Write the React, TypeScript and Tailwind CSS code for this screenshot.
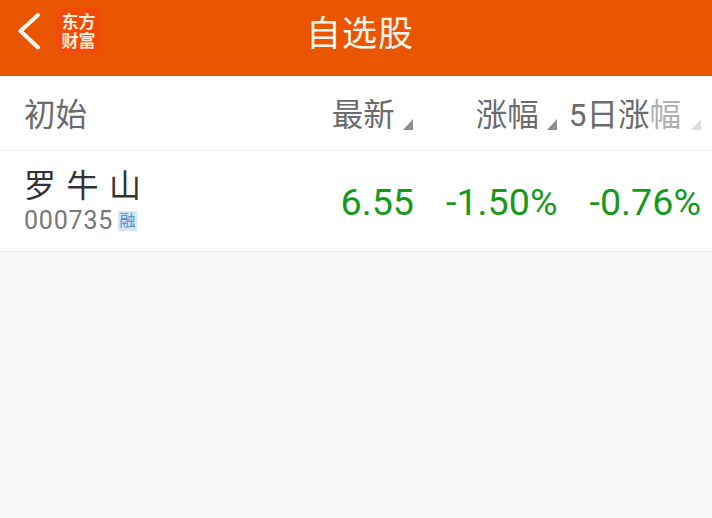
export default function App() {
  const font = { fontFamily: '"Roboto","Noto Sans CJK SC",sans-serif' };
  return (
    <div style={font} className="w-[712px] h-[518px] flex flex-col bg-[#f6f7f9] overflow-hidden">
      <header className="relative h-[76px] bg-[#e95500] flex items-center justify-center shrink-0">
        <svg className="absolute left-[17px] top-[12px]" width="24" height="38" viewBox="0 0 24 38" fill="none">
          <path d="M21 3 L3.5 19 L21 35.5" stroke="#fff8f0" strokeWidth="4" strokeLinecap="round" strokeLinejoin="round" />
        </svg>
        <div className="absolute left-[56px] top-[8px] w-[45px] h-[45px] rounded-[8px] bg-[#f44a08] flex flex-col items-center justify-center pt-[2px] text-[#ffeedd] text-[17px] leading-[19px] font-bold">
          <span>东方</span>
          <span>财富</span>
        </div>
        <h1 className="text-[#fff5ec] text-[35px] leading-none font-normal -mt-[7px] ml-[8px] tracking-[1px]">自选股</h1>
      </header>
      <div className="h-[75px] bg-white border-b border-[#ebebeb] flex items-center pl-[24px] pr-[11px] pt-[5px] shrink-0 text-[#6b6b6b] text-[31.5px] leading-none">
        <span className="flex-1">初始</span>
        <div className="flex items-center">
          <span>最新</span>
          <Tri color="#8f8f8f" />
        </div>
        <div className="flex items-center ml-[63px]">
          <span>涨幅</span>
          <Tri color="#8f8f8f" />
        </div>
        <div className="flex items-center ml-[12px]">
          <span>5日涨</span>
          <span className="text-[#b0b0b0]">幅</span>
          <div className="ml-[2px]">
            <Tri color="#dcdcdc" />
          </div>
        </div>
      </div>
      <div className="h-[101px] bg-white border-b border-[#ebebeb] flex items-center pl-[24px] pr-[11px] shrink-0">
        <div className="flex-1 flex flex-col">
          <span className="text-[#333333] text-[32px] leading-[40px] tracking-[10.5px]">罗牛山</span>
          <div className="flex items-center">
            <span className="text-[#777777] text-[25px] leading-[30px] tracking-[0.8px]">000735</span>
            <span className="ml-[5px] w-[19px] h-[20px] bg-[#d4e5f7] text-[#4a90d9] text-[16px] leading-[20px] text-center">融</span>
          </div>
        </div>
        <span className="text-[#16991c] text-[37.7px] leading-none mt-[3px]">6.55</span>
        <span className="text-[#16991c] text-[37.7px] leading-none mt-[3px] ml-[32px]">-1.50%</span>
        <span className="text-[#16991c] text-[37.7px] leading-none mt-[3px] ml-[32px]">-0.76%</span>
      </div>
    </div>
  );
}

function Tri({ color }: { color: string }) {
  return (
    <svg className="ml-[8px] mt-[18px]" width="10" height="11" viewBox="0 0 10 11">
      <path d="M10 0 V11 H0 Z" fill={color} />
    </svg>
  );
}
